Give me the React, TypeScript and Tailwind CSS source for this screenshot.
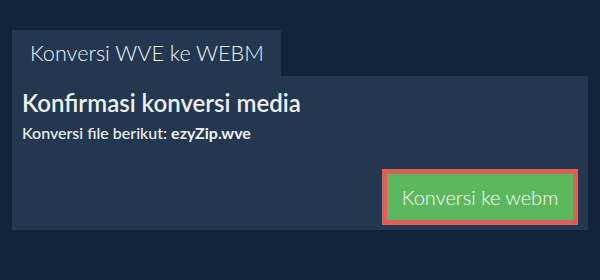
export default function App() {
  return (
    <div className="h-[280px] w-[600px] bg-[#132339] px-3 pt-[30px] font-['Lato',sans-serif]">
      <div className="inline-block h-[46px] w-[269px] bg-[#233750] pl-[18px] pt-[8px] text-[21.6px] font-light leading-[30px] text-[#f0f3f6]">
        Konversi WVE ke WEBM
      </div>
      <div className="flex h-[154px] flex-col bg-[#233750] px-[10px] pt-[12px]">
        <h1 className="text-[24px] font-semibold leading-[30px] text-[#eef1f4]">Konfirmasi konversi media</h1>
        <p className="mt-[5px] text-[16px] font-medium leading-[20px] text-[#eef1f4]">
          Konversi file berikut: <span className="font-bold">ezyZip.wve</span>
        </p>
        <div className="mt-[26px] flex justify-end">
          <button className="h-[56px] w-[196px] border-[5px] border-[#dc5f5c] bg-[#5cb85c] text-[20px] font-light text-white">
            Konversi ke webm
          </button>
        </div>
      </div>
    </div>
  );
}
